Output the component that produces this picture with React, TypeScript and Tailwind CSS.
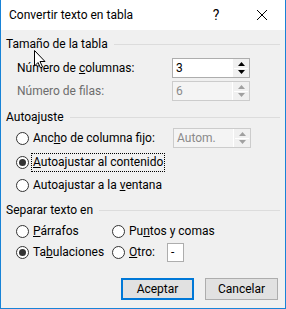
import React from "react";

const font = { fontFamily: 'Roboto, "Noto Sans", sans-serif' };

function SectionHeader({ title, mt }: { title: string; mt: string }) {
  return (
    <div className={`flex h-4 items-center pl-[5px] pr-[5px] ${mt}`}>
      <span className="whitespace-nowrap">{title}</span>
      <div className="ml-[6px] h-px flex-1 bg-[#dcdcdc]" />
    </div>
  );
}

function Radio({ checked }: { checked?: boolean }) {
  return (
    <span className="flex h-[13px] w-[13px] shrink-0 items-center justify-center rounded-full border border-[#333333] bg-white">
      {checked && <span className="h-[7px] w-[7px] rounded-full bg-[#333333]" />}
    </span>
  );
}

function Spin({ value, disabled }: { value: string; disabled?: boolean }) {
  const arrow = disabled ? "#a0a0a0" : "#000000";
  return (
    <div
      className={`flex h-5 w-[78px] border ${
        disabled ? "border-[#cccccc] bg-[#f4f4f4]" : "border-[#adadad] bg-white"
      }`}
    >
      <div className={`flex-1 pl-[3px] leading-[18px] ${disabled ? "text-[#8a8a8a]" : "text-black"}`}>
        {value}
      </div>
      <div className="flex w-[17px] flex-col border-l border-white bg-[#f0f0f0] p-px">
        <div className="flex flex-1 items-center justify-center border-b border-white">
          <svg width="7" height="4" viewBox="0 0 7 4">
            <path d="M3.5 0 L7 4 L0 4 Z" fill={arrow} />
          </svg>
        </div>
        <div className="flex flex-1 items-center justify-center">
          <svg width="7" height="4" viewBox="0 0 7 4">
            <path d="M0 0 L7 0 L3.5 4 Z" fill={arrow} />
          </svg>
        </div>
      </div>
    </div>
  );
}

export default function App() {
  return (
    <div
      className="relative flex h-[309px] w-[286px] flex-col overflow-hidden border border-t-0 border-[#1883d7] bg-[#f0f0f0] text-[12px] text-black"
      style={font}
    >
      {/* Title bar */}
      <div className="flex h-[30px] shrink-0 items-center bg-white pl-2">
        <span className="flex-1">Convertir texto en tabla</span>
        <span className="w-[46px] text-center text-[14px]">?</span>
        <span className="flex w-[46px] items-center justify-center">
          <svg width="10" height="10" viewBox="0 0 10 10">
            <path d="M0 0 L10 10 M10 0 L0 10" stroke="#000" strokeWidth="1" />
          </svg>
        </span>
      </div>

      <SectionHeader title="Tamaño de la tabla" mt="mt-[6px]" />

      <div className="mt-[6px] flex h-5 items-center pl-4">
        <span className="w-[155px]">
          Número de <u>c</u>olumnas:
        </span>
        <Spin value="3" />
      </div>
      <div className="mt-[3px] flex h-5 items-center pl-4">
        <span className="w-[155px] text-[#6d6d6d]">Número de filas:</span>
        <Spin value="6" disabled />
      </div>

      <SectionHeader title="Autoajuste" mt="mt-[8px]" />

      <div className="mt-[3px] flex h-5 items-center pl-[15px]">
        <Radio />
        <span className="ml-1 w-[140px]">
          Anc<u>h</u>o de columna fijo:
        </span>
        <Spin value="Autom." disabled />
      </div>
      <div className="mt-[4px] flex h-5 items-center pl-[15px]">
        <Radio checked />
        <span className="ml-[2px] border border-dotted border-black px-px leading-[17px]">
          <u>A</u>utoajustar al contenido
        </span>
      </div>
      <div className="mt-[3px] flex h-5 items-center pl-[15px]">
        <Radio />
        <span className="ml-1">
          Autoajustar a la <u>v</u>entana
        </span>
      </div>

      <SectionHeader title="Separar texto en" mt="mt-[7px]" />

      <div className="mt-[3px] flex h-5 items-center pl-[15px]">
        <Radio />
        <span className="ml-1 w-[79px]">
          <u>P</u>árrafos
        </span>
        <Radio />
        <span className="ml-1">
          Pu<u>n</u>tos y comas
        </span>
      </div>
      <div className="mt-px flex h-5 items-center pl-[15px]">
        <Radio checked />
        <span className="ml-1 w-[79px]">
          Ta<u>b</u>ulaciones
        </span>
        <Radio />
        <span className="ml-1 w-[38px]">
          <u>O</u>tro:
        </span>
        <div className="flex h-[19px] w-[17px] items-center border border-[#adadad] bg-white pl-[3px]">
          -
        </div>
      </div>

      <div className="mt-[16px] flex justify-end gap-[11px] pr-[7px]">
        <button className="h-[22px] w-[73px] border-2 border-[#0078d7] bg-[#e1e1e1]">Aceptar</button>
        <button className="h-[22px] w-[73px] border border-[#adadad] bg-[#e1e1e1]">Cancelar</button>
      </div>

      {/* Mouse pointer */}
      <svg className="absolute left-[33px] top-[50px]" width="12" height="19" viewBox="0 0 12 19">
        <path d="M0.5 0.5 L0.5 16 L4 12.5 L6.5 18 L8.5 17 L6 11.5 L11 11.5 Z" fill="#fff" stroke="#000" strokeWidth="1" />
      </svg>
    </div>
  );
}
